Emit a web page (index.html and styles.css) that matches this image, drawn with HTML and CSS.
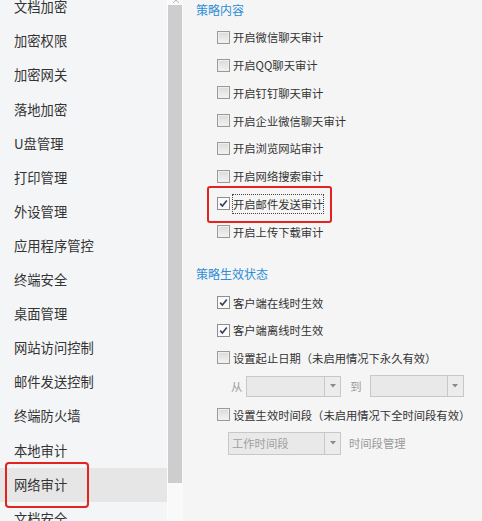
FILE: index.html
```html
<!DOCTYPE html>
<html lang="zh-CN">
<head>
<meta charset="utf-8">
<title>策略</title>
<link rel="stylesheet" href="styles.css">
</head>
<body>
<div class="app">
  <nav class="sidebar">
    <ul class="menu">
      <li class="menu-item">文档加密</li>
      <li class="menu-item">加密权限</li>
      <li class="menu-item">加密网关</li>
      <li class="menu-item">落地加密</li>
      <li class="menu-item">U盘管理</li>
      <li class="menu-item">打印管理</li>
      <li class="menu-item">外设管理</li>
      <li class="menu-item">应用程序管控</li>
      <li class="menu-item">终端安全</li>
      <li class="menu-item">桌面管理</li>
      <li class="menu-item">网站访问控制</li>
      <li class="menu-item">邮件发送控制</li>
      <li class="menu-item">终端防火墙</li>
      <li class="menu-item">本地审计</li>
      <li class="menu-item is-active">网络审计</li>
      <li class="menu-item">文档安全</li>
    </ul>
  </nav>
  <div class="scrollbar">
    <div class="scroll-arrow">
      <svg width="14" height="5" viewBox="0 0 14 5"><path d="M4 3 L7 0 L10 3" fill="none" stroke="#b5b5b5" stroke-width="1"/></svg>
    </div>
    <div class="scroll-thumb"></div>
  </div>
  <main class="content">
    <section class="group group-first">
      <h3 class="group-title">策略内容</h3>
      <div class="rows rows-first">
        <label class="row"><span class="cb"></span><span class="text">开启微信聊天审计</span></label>
        <label class="row"><span class="cb"></span><span class="text">开启QQ聊天审计</span></label>
        <label class="row"><span class="cb"></span><span class="text">开启钉钉聊天审计</span></label>
        <label class="row"><span class="cb"></span><span class="text">开启企业微信聊天审计</span></label>
        <label class="row"><span class="cb"></span><span class="text">开启浏览网站审计</span></label>
        <label class="row"><span class="cb"></span><span class="text">开启网络搜索审计</span></label>
        <label class="row is-marked"><span class="cb is-checked"><svg width="11" height="11" viewBox="0 0 11 11"><path d="M2.2 5.6 L4.4 8 L8.8 2.6" fill="none" stroke="#34415a" stroke-width="1.6"/></svg></span><span class="text is-focused">开启邮件发送审计</span></label>
        <label class="row"><span class="cb"></span><span class="text">开启上传下载审计</span></label>
      </div>
    </section>
    <section class="group group-second">
      <h3 class="group-title">策略生效状态</h3>
      <div class="rows rows-second">
        <label class="row"><span class="cb is-checked"><svg width="11" height="11" viewBox="0 0 11 11"><path d="M2.2 5.6 L4.4 8 L8.8 2.6" fill="none" stroke="#34415a" stroke-width="1.6"/></svg></span><span class="text">客户端在线时生效</span></label>
        <label class="row"><span class="cb is-checked"><svg width="11" height="11" viewBox="0 0 11 11"><path d="M2.2 5.6 L4.4 8 L8.8 2.6" fill="none" stroke="#34415a" stroke-width="1.6"/></svg></span><span class="text">客户端离线时生效</span></label>
        <label class="row"><span class="cb"></span><span class="text">设置起止日期（未启用情况下永久有效）</span></label>
        <div class="row select-row select-row-date">
          <span class="muted">从</span>
          <div class="select select-from"><span class="select-value"></span><span class="select-arrow"><svg width="6" height="4" viewBox="0 0 6 4"><path d="M0 0 H6 L3 3.5 Z" fill="#8a8a8a"/></svg></span></div>
          <span class="muted to-label">到</span>
          <div class="select select-to"><span class="select-value"></span><span class="select-arrow"><svg width="6" height="4" viewBox="0 0 6 4"><path d="M0 0 H6 L3 3.5 Z" fill="#8a8a8a"/></svg></span></div>
        </div>
        <label class="row"><span class="cb"></span><span class="text">设置生效时间段（未启用情况下全时间段有效）</span></label>
        <div class="row select-row select-row-time">
          <div class="select select-period"><span class="select-value">工作时间段</span><span class="select-arrow"><svg width="6" height="4" viewBox="0 0 6 4"><path d="M0 0 H6 L3 3.5 Z" fill="#8a8a8a"/></svg></span></div>
          <span class="muted manage-link">时间段管理</span>
        </div>
      </div>
    </section>
  </main>
</div>
</body>
</html>
```

FILE: styles.css
```css
* { box-sizing: border-box; }

html, body {
  margin: 0;
  padding: 0;
  height: 100%;
  overflow: hidden;
}

body {
  font-family: "Noto Sans CJK SC", "Noto Sans", sans-serif;
  color: #333;
  background: #f5f5f5;
}

.app {
  display: flex;
  height: 521px;
  overflow: hidden;
}

/* Sidebar */
.sidebar {
  width: 167px;
  flex: none;
  background: #f4f5f7;
  overflow: hidden;
}

.menu {
  list-style: none;
  margin: -9.75px 0 0;
  padding: 0;
}

.menu-item {
  height: 34.1px;
  display: flex;
  align-items: center;
  padding-left: 14px;
  font-size: 13.3px;
  line-height: 18px;
  color: #333;
}

.menu-item.is-active {
  position: relative;
  background: #e6e6e6;
}

.menu-item.is-active::after {
  content: "";
  position: absolute;
  left: 5px;
  width: 80px;
  top: -6px;
  bottom: -6px;
  border: 2.5px solid #e3231f;
  border-radius: 4px;
}

/* Scrollbar */
.scrollbar {
  width: 16px;
  flex: none;
  background: #f9f9f9;
  display: flex;
  flex-direction: column;
  border-left: 1px solid #fbfbfb;
}

.scroll-arrow {
  height: 5px;
  display: flex;
  justify-content: center;
  align-items: flex-start;
}

.scroll-thumb {
  height: 478px;
  margin: 0 0 0 0;
  width: 14px;
  background: #cdcdcd;
}

/* Content */
.content {
  flex: 1;
  padding-left: 13px;
  background: #f5f5f5;
}

.group-title {
  margin: 0;
  font-size: 12px;
  line-height: 20px;
  font-weight: normal;
  color: #2c8ed6;
}

.group-second {
  margin-top: 18.7px;
}

.rows-first {
  margin-top: 3.4px;
}

.rows-second {
  margin-top: 4.6px;
}

.row {
  display: flex;
  align-items: center;
  padding-left: 21px;
  font-size: 11.3px;
  line-height: 18px;
  color: #333;
}

.rows-first .row {
  height: 27.77px;
}

.rows-second .row {
  height: 27.5px;
}

.rows-second .select-row {
  height: 29.5px;
}

.cb {
  width: 13px;
  height: 13px;
  flex: none;
  border: 1px solid #9a9a9a;
  background: linear-gradient(#dadada, #f3f3f3);
  box-shadow: inset 0 0 0 1px #eeeeee;
  display: flex;
  align-items: center;
  justify-content: center;
}

.cb.is-checked {
  background: #fbfbfb;
  box-shadow: none;
  border-color: #8e8e8e;
}

.text {
  margin-left: 3px;
  white-space: nowrap;
}

.text.is-focused {
  line-height: 20px;
  padding: 0 1px;
  margin-left: 2px;
  outline: 1px dotted #444;
  outline-offset: -1px;
}

.row.is-marked {
  position: relative;
}

.row.is-marked::after {
  content: "";
  position: absolute;
  left: 11px;
  width: 121px;
  top: -4.4px;
  height: 33px;
  border: 2.5px solid #e3231f;
  border-radius: 3px;
}

/* Select rows */
.select-row-date {
  padding-left: 35px;
}

.select-row-time {
  padding-left: 32px;
}

.muted {
  color: #9a9a9a;
  white-space: nowrap;
}

.select {
  display: flex;
  border: 1px solid #c8c8c8;
  background: #e9e9e9;
  color: #a0a0a0;
}

.select-from {
  width: 95px;
  height: 21px;
  margin-left: 4px;
}

.to-label {
  margin-left: 9px;
}

.select-to {
  width: 94px;
  height: 22px;
  margin-left: 8px;
}

.select-period {
  width: 113px;
  height: 23px;
}

.select-value {
  flex: 1;
  padding-left: 3px;
  display: flex;
  align-items: center;
  white-space: nowrap;
}

.select-arrow {
  width: 16px;
  flex: none;
  border-left: 1px solid #c8c8c8;
  display: flex;
  align-items: center;
  justify-content: center;
  background: #ececec;
}

.manage-link {
  margin-left: 8px;
}
```
